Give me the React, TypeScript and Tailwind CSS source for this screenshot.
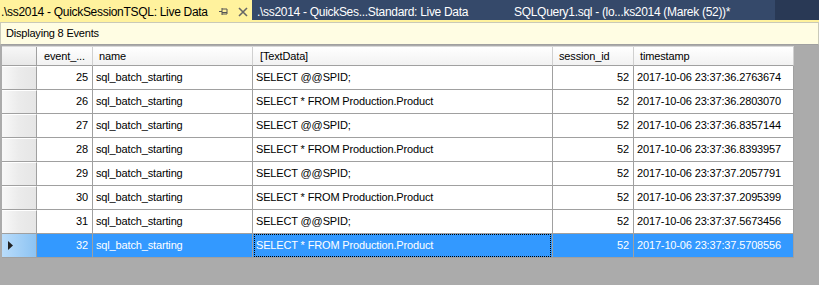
const rows = [
  { id: 25, text: 'SELECT @@SPID;', ts: '2017-10-06 23:37:36.2763674' },
  { id: 26, text: 'SELECT * FROM Production.Product', ts: '2017-10-06 23:37:36.2803070' },
  { id: 27, text: 'SELECT @@SPID;', ts: '2017-10-06 23:37:36.8357144' },
  { id: 28, text: 'SELECT * FROM Production.Product', ts: '2017-10-06 23:37:36.8393957' },
  { id: 29, text: 'SELECT @@SPID;', ts: '2017-10-06 23:37:37.2057791' },
  { id: 30, text: 'SELECT * FROM Production.Product', ts: '2017-10-06 23:37:37.2095399' },
  { id: 31, text: 'SELECT @@SPID;', ts: '2017-10-06 23:37:37.5673456' },
  { id: 32, text: 'SELECT * FROM Production.Product', ts: '2017-10-06 23:37:37.5708556' },
];

function PinIcon() {
  return (
    <svg width="10" height="9" viewBox="0 0 10 9" className="shrink-0">
      <path d="M0 4.5h3M3 1v7M3 2h5v5H3M3 5.5h5" stroke="#555" strokeWidth="1" fill="none" />
    </svg>
  );
}

function CloseIcon() {
  return (
    <svg width="10" height="10" viewBox="0 0 10 10" className="shrink-0">
      <path d="M1 1l8 8M9 1l-8 8" stroke="#666" strokeWidth="1.6" />
    </svg>
  );
}

export default function App() {
  return (
    <div className="w-[819px] h-[285px] bg-[#ababab] flex flex-col overflow-hidden font-['Liberation_Sans',Arial,sans-serif]">
      {/* document tabs */}
      <div className="h-[20px] flex bg-[#293955] text-[12px] tracking-[-0.3px] shrink-0">
        <div className="w-[252px] bg-[#fff29d] flex items-center pl-[1px] pt-[3px] text-black">
          <span className="whitespace-nowrap">.\ss2014 - QuickSessionTSQL: Live Data</span>
          <div className="ml-[11px]"><PinIcon /></div>
          <div className="ml-[9px]"><CloseIcon /></div>
        </div>
        <div className="w-[255px] bg-[#35496a] flex items-center pl-[5px] pt-[3px] text-white whitespace-nowrap">
          .\ss2014 - QuickSes...Standard: Live Data
        </div>
        <div className="w-[268px] bg-[#35496a] flex items-center pl-[7px] pt-[3px] text-white whitespace-nowrap">
          SQLQuery1.sql - (lo...ks2014 (Marek (52))*
        </div>
      </div>
      <div className="h-[2px] bg-[#fff29d] shrink-0" />

      {/* info bar */}
      <div className="h-[23px] bg-[#fffde3] border-t border-x border-b border-[#c9c9b8] border-b-[#a0a0a0] flex items-center pl-[5px] text-[11px] tracking-[-0.2px] text-black shrink-0">
        Displaying 8 Events
      </div>

      {/* grid */}
      <div className="pt-[1px] pl-[2px] text-[11px] tracking-[-0.15px] text-black">
        <div className="flex h-[20px] bg-gradient-to-b from-white to-[#f1f1f1] border-t border-[#d8d8d8] w-[792px]">
          <div className="w-[35px] border-r border-b border-[#a0a0a0] bg-gradient-to-b from-[#f7f7f7] to-[#e8e8e8]" />
          <div className="w-[56px] border-r border-b border-[#d0d0d0] border-b-[#a0a0a0] pl-[7px] flex items-center">event_...</div>
          <div className="w-[160px] border-r border-b border-[#d0d0d0] border-b-[#a0a0a0] pl-[6px] flex items-center">name</div>
          <div className="w-[300px] border-r border-b border-[#d0d0d0] border-b-[#a0a0a0] pl-[7px] flex items-center">[TextData]</div>
          <div className="w-[81px] border-r border-b border-[#d0d0d0] border-b-[#a0a0a0] pl-[6px] flex items-center">session_id</div>
          <div className="w-[160px] border-r border-b border-[#d0d0d0] border-b-[#a0a0a0] pl-[6px] flex items-center">timestamp</div>
        </div>
        {rows.map((r) => {
          const sel = r.id === 32;
          return (
            <div key={r.id} className={`flex h-[24px] w-[792px] ${sel ? 'bg-[#3399ff] text-white' : 'bg-white'}`}>
              {sel ? (
                <div className="w-[35px] border-r border-b border-[#a0a0a0] bg-gradient-to-r from-[#b9dcfa] to-[#8cc3f3] flex items-center pl-[6px]">
                  <svg width="6" height="9" viewBox="0 0 6 9">
                    <path d="M0 0l5 4.5L0 9z" fill="#222" />
                  </svg>
                </div>
              ) : (
                <div className="w-[35px] border-r border-b border-[#a0a0a0] bg-gradient-to-r from-[#f8f8f8] via-[#ebebeb] to-[#e6e6e6] border-t border-t-white" />
              )}
              <div className="w-[56px] border-r border-b border-[#a0a0a0] pr-[4px] flex items-center justify-end">{r.id}</div>
              <div className="w-[160px] border-r border-b border-[#a0a0a0] pl-[3px] flex items-center whitespace-nowrap">sql_batch_starting</div>
              <div className={`w-[300px] border-r border-b border-[#a0a0a0] flex items-center whitespace-nowrap ${sel ? 'pl-[2px]' : 'pl-[3px]'}`}>
                {sel ? (
                  <div className="w-full h-full border border-dotted border-black flex items-center pl-[1px] -ml-[1px]">{r.text}</div>
                ) : (
                  r.text
                )}
              </div>
              <div className="w-[81px] border-r border-b border-[#a0a0a0] pr-[4px] flex items-center justify-end">52</div>
              <div className="w-[160px] border-r border-b border-[#a0a0a0] pl-[3px] flex items-center whitespace-nowrap">{r.ts}</div>
            </div>
          );
        })}
      </div>
    </div>
  );
}
